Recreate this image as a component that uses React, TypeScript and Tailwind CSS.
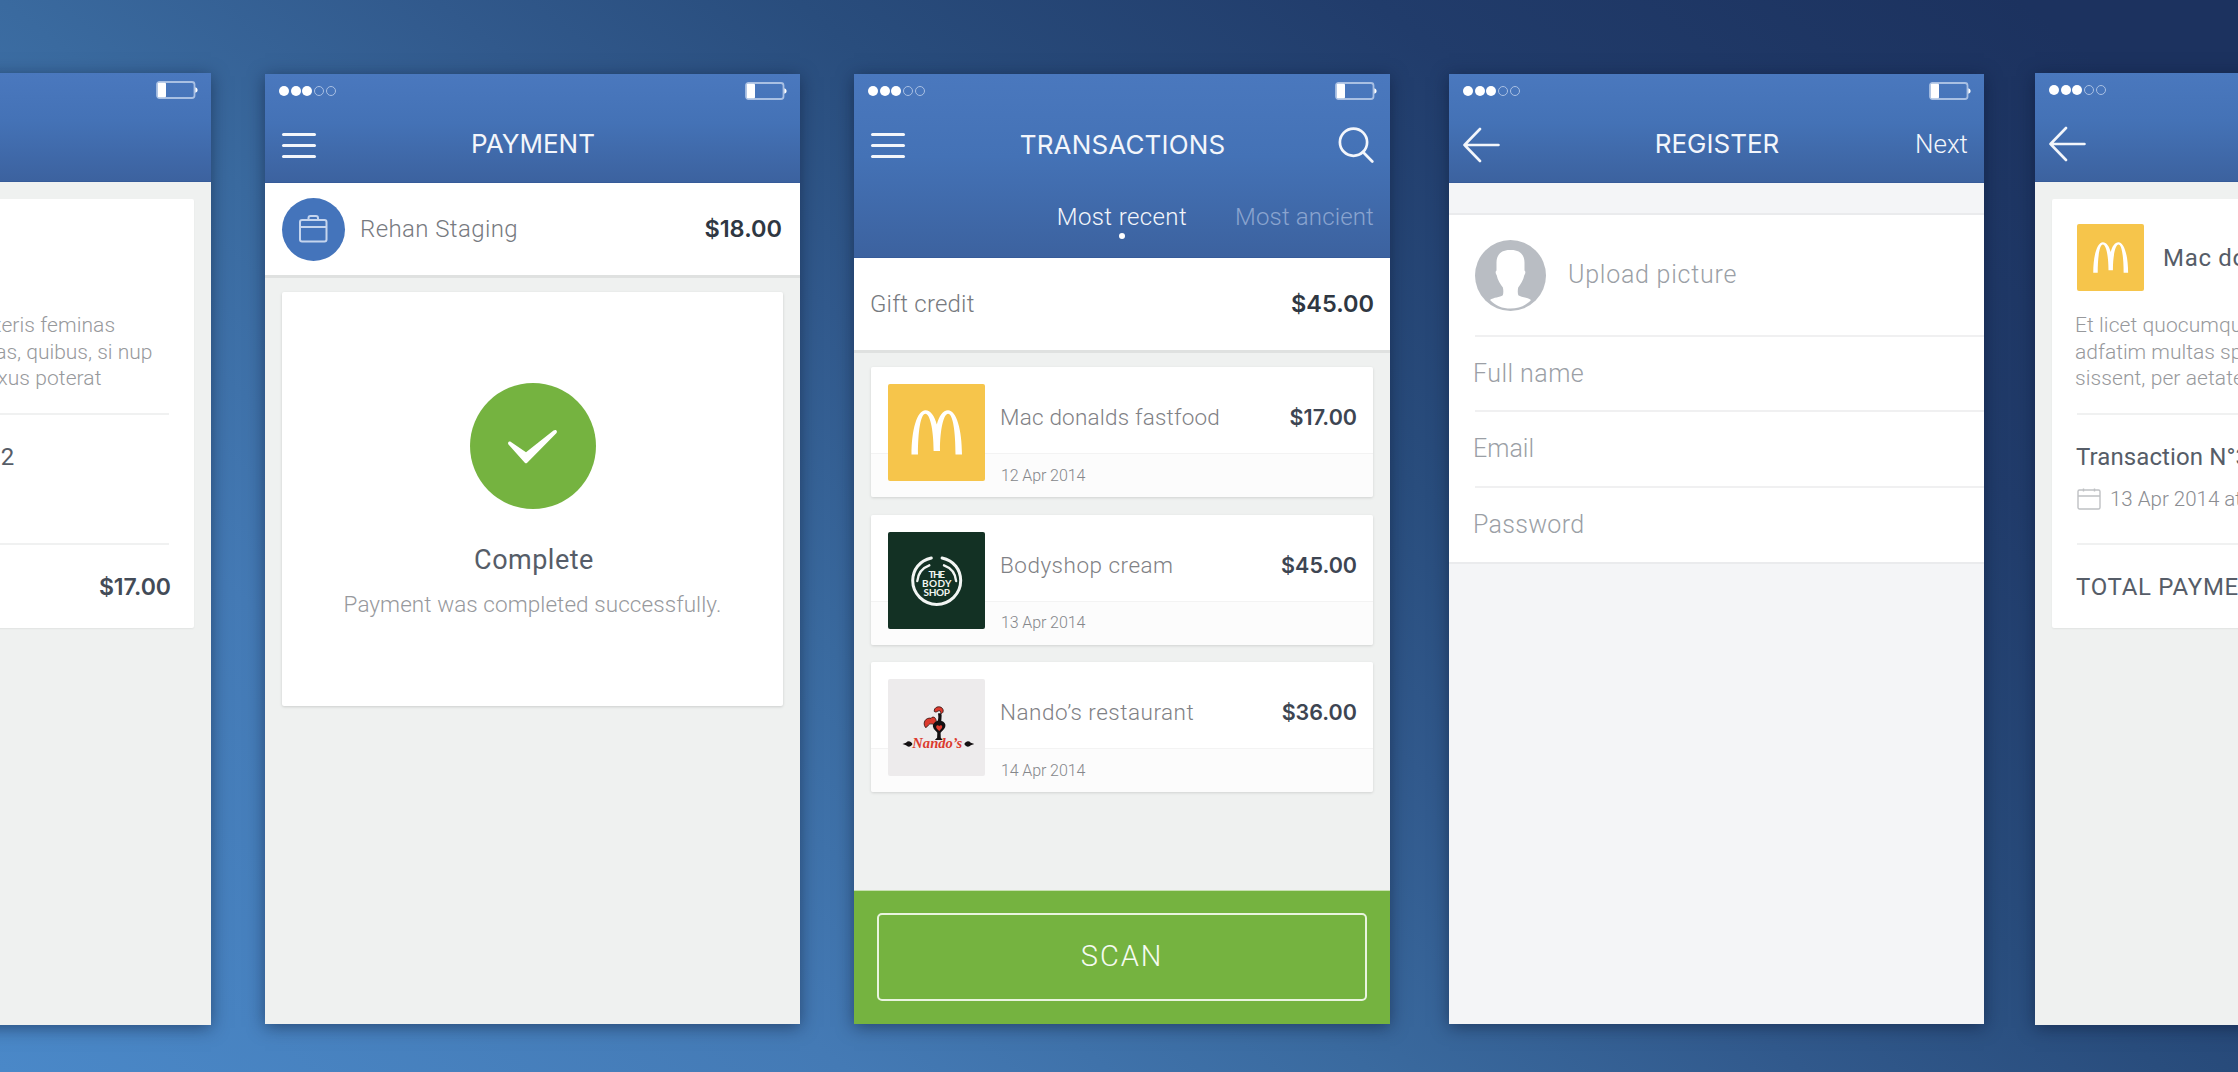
import type { ReactNode } from 'react'

function Signal() {
  return (
    <div className="flex gap-[1.7px]">
      <span className="size-[10px] rounded-full bg-white" />
      <span className="size-[10px] rounded-full bg-white" />
      <span className="size-[10px] rounded-full bg-white" />
      <span className="size-[10px] rounded-full border-[1.5px] border-[#a9c0e3]" />
      <span className="size-[10px] rounded-full border-[1.5px] border-[#a9c0e3]" />
    </div>
  )
}

function Battery() {
  return (
    <svg width="42" height="18" viewBox="0 0 42 18" fill="none">
      <rect x="1" y="1" width="37.5" height="16" rx="2.5" stroke="#a9c0e3" strokeWidth="1.8" />
      <rect x="1.8" y="1.8" width="8.2" height="14.4" rx="1" fill="#fff" />
      <path d="M39.3 6.2c3 .8 3 4.8 0 5.6z" fill="#fff" />
    </svg>
  )
}

function Burger() {
  return (
    <div className="flex w-[34px] flex-col gap-[8px]">
      <span className="h-[3px] rounded-full bg-[#f3f6fb]" />
      <span className="h-[3px] rounded-full bg-[#f3f6fb]" />
      <span className="h-[3px] rounded-full bg-[#f3f6fb]" />
    </div>
  )
}

function BackArrow() {
  return (
    <svg width="37" height="36" viewBox="0 0 37 36" fill="none" stroke="#f3f6fb" strokeWidth="2.6" strokeLinecap="round" strokeLinejoin="round">
      <path d="M17 2 1.5 18 17 34M1.5 18H35.5" />
    </svg>
  )
}

function SearchIcon() {
  return (
    <svg width="36" height="36" viewBox="0 0 36 36" fill="none" stroke="#f3f6fb" strokeWidth="2.7" strokeLinecap="round">
      <circle cx="15.5" cy="15.2" r="13.6" />
      <path d="M25 25 34.3 34.5" />
    </svg>
  )
}

function Golden({ size }: { size: number }) {
  return (
    <svg width={size} height={size} viewBox="0 0 97 97" className="shrink-0 rounded-[2px] bg-[#f6c54b]">
      <path
        fill="#fff"
        d="M23.5 70.5C23.5 46 29 26.3 37.5 26.3C42.5 26.3 46.6 32 48.8 40.5C51 32 55 26.3 60 26.3C68.5 26.3 74 46 74 70.5H67.500C67.500 48 65 29.8 60 29.8C56 29.8 52 44 52 67H45.600C45.600 44 41.5 29.8 37.5 29.8C32.500 29.8 30 48 30 70.5Z"
      />
    </svg>
  )
}

function BodyShop() {
  return (
    <svg width="97" height="97" viewBox="0 0 97 97" className="shrink-0 rounded-[2px] bg-[#133124]">
      <g fill="none" stroke="#f2f5f3" strokeLinecap="round">
        <path strokeWidth="3" d="M43.3 26C31.5 28.5 24.7 38 24.7 48.6a24 23.8 0 0 0 48 0C72.700 38 66 28.500 54.100 26" />
        <path strokeWidth="2.4" d="M41.300 33.300C34 36 30 42 29.300 49" />
        <path strokeWidth="2.400" d="M56 33.300C63.500 36 67.500 42 68.100 49" />
      </g>
      <g fill="#f2f5f3" textAnchor="middle" className="font-['Lato'] text-[10px] font-bold">
        <text x="48.8" y="45.500" textLength="16.500">THE</text>
        <text x="48.8" y="54.600" textLength="29.500">BODY</text>
        <text x="48.8" y="64" textLength="26.500">SHOP</text>
      </g>
    </svg>
  )
}

function Nandos() {
  return (
    <svg width="97" height="97" viewBox="0 0 97 97" className="shrink-0 rounded-[2px] bg-[#edebec]">
      <g fill="#dc3a2e" stroke="#2a1312" strokeWidth="0.8">
        <path d="M46.300 32.500c-.8-4 5-6.500 8-3.200 1.800 2.200.8 5.200-1.600 5.500.6-2.600-1-3.600-2.600-2.800-1.500.8-2.200 1.600-3.800.5z" />
        <path d="M37.500 48.500c-3.600-5 .7-10.500 5.600-9.200.6-1.800 3.900-1.600 4.400.4 1.600 2.800.6 5.300-1.700 6.200-1.500-1.600-4.500-1.200-5.500.3-.6.9-1.300 2-2.800 2.300z" />
      </g>
      <path fill="#141012" d="M50 34.500c2.500-1 4 .5 3.600 2.500l-.3 5c3 .6 5 3.300 3.800 6.200-.9 2.300-3.200 3.700-4.500 5.600l.2 5 2 2.200h-8l2.300-2.200.2-5c-1.500-1.900-3.800-3.600-4.300-6-.5-2.700 1.800-5.200 4.500-5.800 1.200-2.300.9-5 .5-7.500z" />
      <path fill="#e23b30" d="M51.200 52c-1.800-1.500-3.300-2.800-3-4.400.3-1.600 2.200-1.700 3-.4.9-1.300 2.800-1.200 3 .4.200 1.600-1.300 2.900-3 4.400z" />
      <path fill="#141012" d="M14.500 65l3.500-1.300c2-2.200 4.600-2 6.500 1.300-1.900 3.300-4.500 3.500-6.500 1.300zM86.300 65l-3.500-1.300c-2-2.200-4.600-2-6.500 1.300 1.900 3.300 4.500 3.500 6.500 1.300z" />
      <text x="24.300" y="68.800" textLength="50" lengthAdjust="spacingAndGlyphs" fill="#dc3a2e" className="font-['Liberation_Serif'] text-[15px] font-bold italic">Nando’s</text>
    </svg>
  )
}

function Briefcase() {
  return (
    <svg width="29" height="28" viewBox="0 0 29 28" fill="none" stroke="#c5d5ee" strokeWidth="2">
      <rect x="1" y="5" width="26.500" height="21.500" rx="2" />
      <path d="M1 12h26.500M9.500 5V3a2 2 0 0 1 2-2h5.500a2 2 0 0 1 2 2v2" />
    </svg>
  )
}

function Avatar() {
  return (
    <svg width="71" height="71" viewBox="0 0 71 71" className="shrink-0">
      <circle cx="35.500" cy="35.500" r="35.500" fill="#b9bdc3" />
      <path
        fill="#fff"
        d="M35.500 10C45 9.700 49.500 15 49.500 22.500V30.500C50.800 31 50.600 33.500 49.300 35.200C48.500 40 45.500 44.500 43.200 47.500C42.600 50.500 42.600 53 43.300 55.300C46 57.200 52.500 57.500 56 60C50.500 66 43.500 68.600 35.500 68.600S20.500 66 15 60C18.500 57.500 25 57.200 27.800 55.300C28.500 53 28.500 50.500 27.900 47.500C25.500 44.500 22.500 40 21.700 35.200C20.400 33.500 20.200 31 21.500 30.500V22.500C21.500 15 26 9.700 35.500 10Z"
      />
    </svg>
  )
}

function Calendar() {
  return (
    <svg width="24" height="22" viewBox="0 0 24 22" fill="none" stroke="#bfc1c4" strokeWidth="1.400">
      <rect x="1" y="2" width="22" height="19" rx="1.500" />
      <path d="M1 8h22M6.500 .500v3M17.500 .500v3" />
    </svg>
  )
}

function Header({ left, title, right, edge, children }: { left: ReactNode; title: ReactNode; right?: ReactNode; edge?: boolean; children?: ReactNode }) {
  return (
    <header className="shrink-0 border-b border-[#365b99] bg-linear-to-b from-[#4a78be] via-[#4472b6] via-45% to-[#3c629f]">
      <div className={`flex items-center justify-between pr-[13px] pl-[14px] ${edge ? 'h-[33px]' : 'h-[34px]'}`}>
        <Signal />
        <Battery />
      </div>
      <div className={`grid grid-cols-[1fr_auto_1fr] items-center pr-[16px] text-[26px] text-[#f3f6fb] ${edge ? 'h-[75px] pl-[14px]' : children ? 'h-[75px] pl-[17px]' : 'h-[74px] pl-[17px]'}`}>
        <div>{left}</div>
        <h1 className="pb-[2px] font-['Inter'] leading-none font-normal">{title}</h1>
        <div className="flex justify-end">{right}</div>
      </div>
      {children}
    </header>
  )
}

function Phone({ className, children }: { className: string; children: ReactNode }) {
  return <section className={`flex shrink-0 flex-col shadow-[0_3px_16px_rgba(10,20,45,0.5)] ${className}`}>{children}</section>
}

function Transaction({ logo, name, amount, date }: { logo: ReactNode; name: ReactNode; amount: string; date: string }) {
  return (
    <div className="flex h-[130px] rounded-[2px] bg-[linear-gradient(to_bottom,#fff_86px,#f3f3f3_86px,#f3f3f3_87px,#fcfcfc_87px)] p-[17px] pr-[16px] shadow-[0_1px_3px_rgba(0,0,0,0.13)]">
      {logo}
      <div className="-mt-[17px] ml-[15px] flex-1">
        <div className="flex h-[87px] items-center justify-between pt-[15px]">
          <span className="text-[22.500px] text-[#7f8185]">{name}</span>
          <span className="pb-px font-['Inter'] text-[21.500px] font-semibold text-[#3d4552]">{amount}</span>
        </div>
        <div className="flex h-[43px] items-center pl-px text-[16px] tracking-[-0.100px] text-[#85878b]">{date}</div>
      </div>
    </div>
  )
}

function Receipt() {
  return (
    <Phone className="h-[952px] w-[533px] bg-[#eff1f0]">
      <Header edge left={<BackArrow />} title="" />
      <div className="mx-[17px] mt-[17px] h-[429px] rounded-[2px] bg-white px-[25px] pt-[25px] shadow-[0_1px_2px_rgba(0,0,0,0.06)]">
        <div className="flex items-center">
          <Golden size={67} />
          <span className="ml-[19px] text-[24px] leading-none font-normal tracking-[0.700px] text-[#565d68]">Mac donalds</span>
        </div>
        <p className="mt-[21px] -ml-[2px] text-[21px] leading-[26.500px] whitespace-nowrap text-[#97999c]">
          <span className="tracking-[0.080px]">Et licet quocumque oculos flexeris feminas</span>
          <br />
          adfatim multas spectare cirratas, quibus, si nup
          <br />
          <span className="tracking-[0.080px]">sissent, per aetatem ter iam nixus poterat</span>
        </p>
        <hr className="mt-[21px] border-t-2 border-[#f0f1f1]" />
        <p className="mt-[27px] -ml-px text-[24px] leading-[30px] font-normal tracking-[0.100px] whitespace-nowrap text-[#565d68]">Transaction N°3213253212</p>
        <p className="mt-[14px] flex items-center gap-[9px] text-[20.500px] leading-[26px] text-[#8b8d91]">
          <Calendar />
          13 Apr 2014 at 12:30
        </p>
        <hr className="mt-[31px] border-t-2 border-[#f0f1f1]" />
        <div className="mt-[27px] flex justify-between text-[24px] leading-[30px] font-normal">
          <span className="-ml-px tracking-[0.700px] text-[#565d68]">TOTAL PAYMENT</span>
          <span className="-mr-[2px] font-['Inter'] text-[23px] font-semibold text-[#434b57]">$17.00</span>
        </div>
      </div>
    </Phone>
  )
}

export default function App() {
  return (
    <main className="h-[1072px] w-[2238px] overflow-hidden bg-[linear-gradient(38deg,#4a88c8_0%,#447ab5_23.5%,#3a6a9f_38%,#31598c_50%,#294d7d_60%,#213c6b_76%,#1c325f_94%)] font-['Roboto',sans-serif] font-light">
      <div className="-ml-[322px] flex w-[2890px] items-start pt-[73px]">
        <Receipt />

        <Phone className="mt-px ml-[54px] h-[950px] w-[535px] bg-[#eff1f0]">
          <Header left={<Burger />} title="PAYMENT" />
          <div className="flex h-[95px] items-center border-b-3 border-[#dfe1e0] bg-white pr-[18px] pl-[17px]">
            <span className="flex size-[63px] items-center justify-center rounded-full bg-[#4474bb] pb-px">
              <Briefcase />
            </span>
            <span className="ml-[15px] pb-px text-[24px] tracking-[0.400px] text-[#777a80]">Rehan Staging</span>
            <span className="ml-auto font-['Inter'] text-[23.500px] font-semibold text-[#2f3742]">$18.00</span>
          </div>
          <div className="mx-[17px] mt-[14px] flex h-[414px] flex-col items-center rounded-[2px] bg-white pt-[91px] shadow-[0_1px_3px_rgba(0,0,0,0.15)]">
            <svg width="126" height="126" viewBox="0 0 126 126" className="shrink-0">
              <circle cx="63" cy="63" r="63" fill="#75b340" />
              <path fill="#fff" d="M41 59 56 69.300 83.500 47.600C85.800 46 88 48 86.300 50.200L57.200 79.700Q56 81 54.800 79.700L38.500 61.500C37.200 59.500 39 57.800 41 59Z" />
            </svg>
            <p className="mt-[35px] ml-[3px] text-[27px] leading-[32px] font-normal tracking-[0.500px] text-[#565d68]">Complete</p>
            <p className="mt-[13px] text-[22.500px] leading-[30px] tracking-[0.070px] text-[#97999d]">Payment was completed successfully.</p>
          </div>
        </Phone>

        <Phone className="mt-px ml-[54px] h-[950px] w-[536px] bg-[#eff1f0]">
          <Header left={<Burger />} title={<span className="tracking-[0.150px]">TRANSACTIONS</span>} right={<span className="-mt-px block"><SearchIcon /></span>}>
            <div className="flex h-[74px] justify-end gap-[49px] pt-[18px] pr-[16px] text-[24px] leading-[32px] text-[#f3f6fb]">
              <div className="-mr-px flex flex-col items-center tracking-[0.400px]">
                Most recent
                <span className="size-[6px] rounded-full bg-white" />
              </div>
              <div className="tracking-[0.150px] text-[#8aa4cf]">Most ancient</div>
            </div>
          </Header>
          <div className="flex h-[95px] shrink-0 items-center justify-between border-b-3 border-[#dfe1e0] bg-white pr-[16px] pl-[16px]">
            <span className="text-[24px] tracking-[0.200px] text-[#777a80]">Gift credit</span>
            <span className="font-['Inter'] text-[23.500px] font-semibold text-[#2f3742]">$45.00</span>
          </div>
          <div className="mx-[17px] mt-[14px] flex flex-col gap-[17.500px]">
            <Transaction logo={<Golden size={97} />} name={<span className="tracking-[0.200px]">Mac donalds fastfood</span>} amount="$17.00" date="12 Apr 2014" />
            <Transaction logo={<BodyShop />} name={<span className="tracking-[0.500px]">Bodyshop cream</span>} amount="$45.00" date="13 Apr 2014" />
            <Transaction logo={<Nandos />} name={<span className="tracking-[0.500px]">Nando’s restaurant</span>} amount="$36.00" date="14 Apr 2014" />
          </div>
          <div className="mt-auto h-[134px] shrink-0 border-t border-[#c7e0b0] bg-[#75b340] px-[23px] pt-[22px]">
            <button className="flex h-[88px] w-full items-center justify-center rounded-[5px] border-[2.500px] border-[#e9f4df] text-[29px] tracking-[1.900px] text-[#f6fbf2]">SCAN</button>
          </div>
        </Phone>

        <Phone className="mt-px ml-[59px] h-[950px] w-[535px] bg-[#f4f5f7]">
          <Header left={<span className="-ml-[3px] block"><BackArrow /></span>} title="REGISTER" right={<span className="pb-px text-[26px]">Next</span>} />
          <div className="mt-[30px] border-y-2 border-[#eaebed] bg-white text-[25px] text-[#9b9fa6]">
            <div className="ml-[26px] flex h-[122px] items-center border-b-2 border-[#f0f0f1]">
              <Avatar />
              <span className="ml-[22px] tracking-[0.750px]">Upload picture</span>
            </div>
            <div className="ml-[26px] flex h-[75px] items-center border-b-2 border-[#f0f0f1]"><span className="-ml-[2px] tracking-[0.450px]">Full name</span></div>
            <div className="ml-[26px] flex h-[76px] items-center border-b-2 border-[#f0f0f1]"><span className="-ml-[2px]">Email</span></div>
            <div className="ml-[26px] flex h-[74px] items-center"><span className="-ml-[2px] tracking-[0.300px]">Password</span></div>
          </div>
        </Phone>

        <div className="ml-[51px] shrink-0">
          <Receipt />
        </div>
      </div>
    </main>
  )
}
